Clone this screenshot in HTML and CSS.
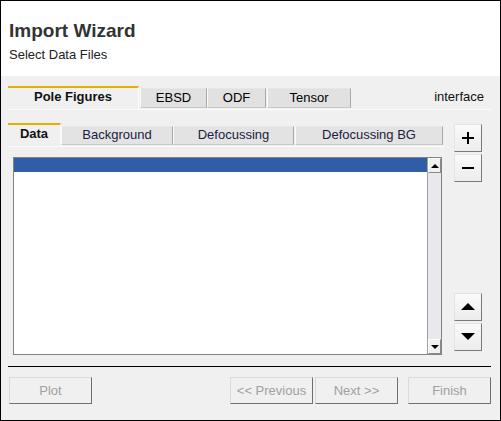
FILE: index.html
```html
<!DOCTYPE html>
<html>
<head>
<meta charset="utf-8">
<link rel="stylesheet" href="styles.css">
</head>
<body>
<div class="window">
  <div class="header">
    <div class="title">Import Wizard</div>
    <div class="subtitle">Select Data Files</div>
  </div>
  <div class="main">
    <div class="outer-tabs">
      <div class="otab selected">Pole Figures</div>
      <div class="otab ebsd">EBSD</div>
      <div class="otab odf">ODF</div>
      <div class="otab tensor">Tensor</div>
      <div class="iface">interface</div>
    </div>
    <div class="tabline"></div>
    <div class="panel">
      <div class="leftcol">
        <div class="inner-tabs">
          <div class="itab selected">Data</div>
          <div class="itab bg">Background</div>
          <div class="itab defo">Defocussing</div>
          <div class="itab defobg">Defocussing BG</div>
        </div>
        <div class="itabline"></div>
        <div class="list">
          <div class="items">
            <div class="row sel"></div>
          </div>
          <div class="scrollbar">
            <div class="sbtn"><span class="arr up"></span></div>
            <div class="track"></div>
            <div class="sbtn"><span class="arr down"></span></div>
          </div>
        </div>
      </div>
      <div class="rightcol">
        <div class="tbtn"><svg width="12" height="12" viewBox="0 0 12 12"><rect x="5" y="0" width="2" height="12" fill="#000"/><rect x="0" y="5" width="12" height="2" fill="#000"/></svg></div>
        <div class="tbtn gap"><svg width="12" height="12" viewBox="0 0 12 12"><rect x="0" y="5" width="12" height="2" fill="#000"/></svg></div>
        <div class="tbtn push"><svg width="14" height="8" viewBox="0 0 14 8"><polygon points="7,0 14,7 0,7" fill="#000"/></svg></div>
        <div class="tbtn gap"><svg width="14" height="8" viewBox="0 0 14 8"><polygon points="0,0 14,0 7,7" fill="#000"/></svg></div>
      </div>
    </div>
    <div class="sep"></div>
    <div class="footer">
      <div class="fbtn plot">Plot</div>
      <div class="fbtn prev">&lt;&lt; Previous</div>
      <div class="fbtn next">Next &gt;&gt;</div>
      <div class="fbtn finish">Finish</div>
    </div>
  </div>
</div>
</body>
</html>
```

FILE: styles.css
```css
* { box-sizing: border-box; }
html, body { margin: 0; padding: 0; }
body {
  font-family: "Liberation Sans", Arial, sans-serif;
  font-size: 13px;
  line-height: 15px;
  background: #fff;
}
.window {
  width: 501px;
  height: 421px;
  border: 1px solid #000;
  display: flex;
  flex-direction: column;
}
.header {
  height: 75px;
  background: #fff;
  padding: 19px 8px 0 8px;
  flex: none;
}
.title {
  font-size: 19px;
  line-height: 22px;
  font-weight: bold;
  color: #333;
}
.subtitle {
  margin-top: 5px;
  font-size: 13px;
  line-height: 15px;
  color: #222;
}
.main {
  flex: 1;
  background: #f0f0f0;
  padding: 10px 9px 0 7px;
  display: flex;
  flex-direction: column;
}
.outer-tabs {
  display: flex;
  align-items: flex-start;
  height: 23px;
}
.otab {
  height: 20px;
  margin-top: 2px;
  padding-top: 1px;
  text-align: center;
  color: #000;
  background: #e1e1e1;
  border: 1px solid;
  border-color: #e6e6e6 #a8a8a8 #c8c8c8 #fafafa;
}
.otab.selected {
  width: 131px;
  height: 23px;
  margin-top: 0;
  padding-top: 1px;
  font-weight: bold;
  color: #111;
  background: #f0f0f0;
  border: none;
  border-top: 2px solid #e6b000;
  border-right: 1px solid #fbfbfb;
}
.otab.ebsd { width: 67px; margin-left: 1px; }
.otab.odf { width: 59px; }
.otab.tensor { width: 84px; margin-left: 1px; }
.iface {
  margin-left: auto;
  margin-right: 7px;
  margin-top: 3px;
  color: #111;
}
.tabline {
  height: 1px;
  background: #fbfbfb;
}
.panel {
  display: flex;
  margin-top: 13px;
}
.leftcol {
  width: 436px;
  display: flex;
  flex-direction: column;
}
.inner-tabs {
  display: flex;
  height: 23px;
  align-items: flex-start;
}
.itab {
  height: 19px;
  margin-top: 3px;
  text-align: center;
  color: #1c1c40;
  background: #e3e3e3;
  border: 1px solid;
  border-color: #e8e8e8 #a8a8a8 #c8c8c8 #fafafa;
}
.itab.selected {
  width: 53px;
  height: 23px;
  margin-top: 0;
  padding-top: 1px;
  font-weight: bold;
  color: #111;
  background: #f0f0f0;
  border: none;
  border-top: 2px solid #e6b000;
  border-right: 1px solid #fbfbfb;
}
.itab.bg { width: 112px; }
.itab.defo { width: 121px; }
.itab.defobg { width: 148px; margin-left: 1px; }
.itabline {
  height: 1px;
  background: #fbfbfb;
}
.list {
  margin: 10px 0 0 5px;
  width: 429px;
  height: 198px;
  border: 1px solid #828282;
  background: #fff;
  display: flex;
}
.items {
  flex: 1;
}
.row.sel {
  height: 14px;
  background: #2f5ea6;
}
.scrollbar {
  width: 14px;
  display: flex;
  flex-direction: column;
  background: #e9e8ee;
  border-left: 1px solid #a0a0a0;
}
.sbtn {
  height: 15px;
  background: #f0f0f0;
  border: 1px solid;
  border-color: #fff #8a8a8a #8a8a8a #fff;
  display: flex;
  align-items: center;
  justify-content: center;
}
.track { flex: 1; }
.arr {
  width: 0;
  height: 0;
  border-left: 4px solid transparent;
  border-right: 4px solid transparent;
}
.arr.up { border-bottom: 4px solid #000; }
.arr.down { border-top: 4px solid #000; }
.rightcol {
  width: 28px;
  margin-left: 10px;
  display: flex;
  flex-direction: column;
  padding-top: 1px;
  padding-bottom: 4px;
}
.tbtn {
  width: 28px;
  height: 28px;
  background: linear-gradient(#fafafa, #ececec);
  border: 1px solid;
  border-color: #e4e4e4 #7a7a7a #7a7a7a #e4e4e4;
  display: flex;
  align-items: center;
  justify-content: center;
}
.tbtn.gap { margin-top: 2px; }
.tbtn.push { margin-top: auto; }
.sep {
  margin-top: 11px;
  height: 1px;
  background: #000;
}
.footer {
  display: flex;
  margin-top: 10px;
}
.fbtn {
  width: 83px;
  height: 27px;
  line-height: 25px;
  text-align: center;
  color: #a0a0a0;
  background: #f0f0f0;
  border: 1px solid;
  border-color: #dadada #6e6e6e #6e6e6e #dadada;
}
.fbtn.plot { margin-left: 1px; }
.fbtn.prev { margin-left: auto; }
.fbtn.next { margin-left: 2px; }
.fbtn.finish { margin-left: 10px; }
```
